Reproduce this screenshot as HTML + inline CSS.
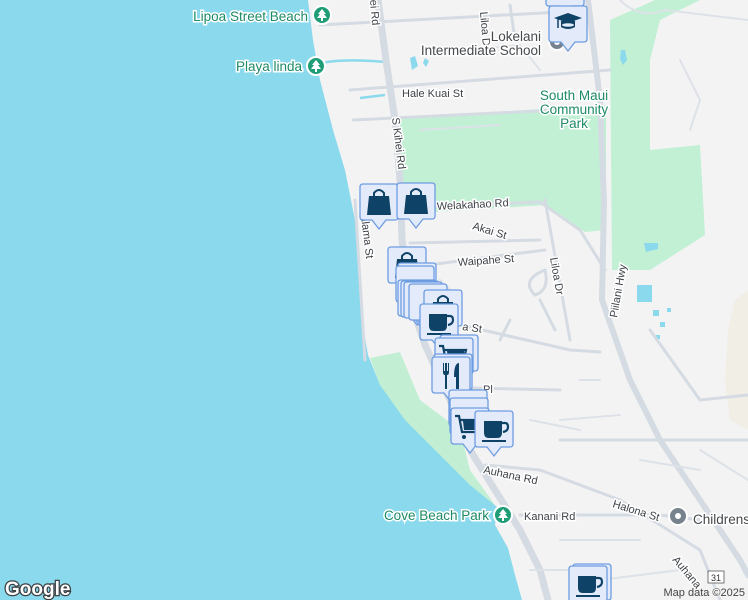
<!DOCTYPE html>
<html><head><meta charset="utf-8"><style>
html,body{margin:0;padding:0;width:748px;height:600px;overflow:hidden;background:#f4f3f4}
svg{display:block}
text{font-family:"Liberation Sans",sans-serif}
</style></head><body>
<svg width="748" height="600" viewBox="0 0 748 600" xmlns="http://www.w3.org/2000/svg">
<defs>
<g id="mk">
<path d="M3 0H35Q38 0 38 3V33Q38 36 35 36H26L19 45L12 36H3Q0 36 0 33V3Q0 0 3 0Z" fill="#e3ebfb" stroke="#6d9ce0" stroke-width="1.3"/>
</g>
<g id="bag"><use href="#mk"/><path d="M9 12H29L31 31H7Z" fill="#0e4266"/><path d="M14 13V9Q19 3 24 9V13" fill="none" stroke="#0e4266" stroke-width="2"/></g>
<g id="cup"><use href="#mk"/><path d="M9 10H27V22Q27 27 22 27H14Q9 27 9 22Z" fill="#0e4266"/><path d="M27 12H30Q33 12 33 16Q33 20 28 21" fill="none" stroke="#0e4266" stroke-width="2.2"/><rect x="7" y="29" width="24" height="2" fill="#0e4266"/></g>
<g id="cart"><use href="#mk"/><path d="M4 8H8L11 24H28L31 12H9" fill="none" stroke="#0e4266" stroke-width="2.2"/><path d="M12 13h17v9h-16z" fill="#0e4266"/><circle cx="13" cy="29" r="2" fill="#0e4266"/><circle cx="26" cy="29" r="2" fill="#0e4266"/></g>
<g id="fork"><use href="#mk"/><path d="M11 6V15Q11 18 13 18V32H15V18Q17 18 17 15V6H16V14H15V6H13V14H12V6Z" fill="#0e4266"/><path d="M22 20Q22 6 27 6V32H24V20Z" fill="#0e4266"/></g>
<g id="tree"><circle r="9" fill="#1f9d77" stroke="#fff" stroke-width="2"/><path d="M0 -6L4 -1H2L5 3H1V6H-1V3H-5L-2 -1H-4Z" fill="#fff"/></g>
</defs>
<rect width="748" height="600" fill="#f4f3f4"/>
<path d="M748 290L735 300L728 330L725 380L730 420L748 430Z" fill="#f1eee6"/>
<path d="M400 118L606 105L606 230L585 232L545 205L470 210L400 214Z" fill="#c1f0d4"/>
<path d="M610 20L655 0L700 0L660 20L650 60L650 150L700 145L705 235L650 270L612 270Z" fill="#c1f0d4"/>
<path d="M370 358L400 352L420 400L460 430L470 470L495 505L470 490L430 460L400 420L380 385Z" fill="#c2efd3"/>
<path d="M0 0H308L313 40L320 80L333 130L345 170L355 220L360 270L362 320L368 355L380 385L405 420L440 455L470 485L497 507L495 525L508 548L515 575L522 600H0Z" fill="#8bd9ec"/>
<path d="M360 98L385 95" stroke="#8bd9ec" stroke-width="2.5" fill="none"/>
<path d="M318 64Q340 58 385 62" stroke="#8bd9ec" stroke-width="2.5" fill="none"/>
<path d="M410 58l5 -2 3 10 -6 4z M425 58l4 3 -3 6-3-4z" fill="#8bd9ec"/>
<path d="M621 50l4 0 2 10-4 5-3-6z M644 243l14 0 0 6-12 3z M637 285h15v17h-15z" fill="#8bd9ec"/>
<path d="M653 310h6v6h-6zM660 322h5v5h-5zM656 335h4v4h-4zM667 308h4v4h-4z" fill="#8bd9ec"/>
<g fill="none" stroke="#d5dbe2" stroke-linecap="round">
<path d="M378 0L386 60L395 120L400 180L402 240L410 300L425 345L450 400L470 450L495 490L520 530L540 570L548 600" stroke-width="7"/>
<path d="M588 0L600 100L604 200L602 300L630 380L660 440L700 500L740 560L748 575" stroke-width="6"/>
<g stroke-width="3">
<path d="M320 25L560 12L590 8"/><path d="M350 90L610 70"/><path d="M353 120L600 108"/>
<path d="M404 208L540 202L580 230L605 270"/><path d="M410 243L540 240"/><path d="M405 268L545 250"/>
<path d="M430 318L570 350L600 352"/><path d="M470 388L560 390"/><path d="M470 390L480 395"/>
<path d="M485 465L540 470L620 500L700 550L720 600"/><path d="M520 515L660 515L700 520"/>
<path d="M545 200L570 340"/><path d="M355 200L365 360"/><path d="M510 5L515 40"/><path d="M545 270Q520 280 535 295Q550 290 545 270"/>
<path d="M560 440L748 440"/><path d="M650 330L700 400L748 395"/><path d="M510 320L500 340M540 300L555 330"/>
</g>
<g stroke-width="2" stroke="#dde2e8">
<path d="M620 0Q640 20 665 10L748 20"/><path d="M680 60L700 100L690 130"/><path d="M470 50L520 45L540 70"/><path d="M420 130L500 125"/>
<path d="M440 280L460 300"/><path d="M560 420L620 415"/><path d="M530 570L600 570"/><path d="M600 580L680 570"/><path d="M560 540L640 540"/>
<path d="M580 380L600 380M530 420L580 430"/><path d="M640 460L700 470M700 450L748 480"/>
</g>
</g>
<g font-size="11" fill="#3d4247" stroke="#fff" stroke-width="3" paint-order="stroke">
<text x="402" y="97">Hale Kuai St</text>
<text x="437" y="210" transform="rotate(-3 437 210)">Welakahao Rd</text>
<text x="472" y="229" transform="rotate(17 472 229)">Akai St</text>
<text x="458" y="266" transform="rotate(-4 458 266)">Waipahe St</text>
<text x="550" y="258" transform="rotate(80 550 258)">Liloa Dr</text>
<text x="617" y="318" transform="rotate(-80 617 318)">Piilani Hwy</text>
<text x="392" y="118" transform="rotate(83 392 118)">S Kihei Rd</text>
<text x="360" y="208" transform="rotate(83 360 208)">Halama St</text>
<text x="483" y="473" transform="rotate(12 483 473)">Auhana Rd</text>
<text x="524" y="520">Kanani Rd</text>
<text x="612" y="507" transform="rotate(17 612 507)">Halona St</text>
<text x="672" y="560" transform="rotate(50 672 560)">Auhana</text>
<text x="462" y="330" transform="rotate(8 462 330)">a St</text>
<text x="483" y="393">Pl</text>
<text x="480" y="12" transform="rotate(85 480 12)">Liloa Dr</text>
<text x="370" y="0" transform="rotate(85 370 0)">ei Rd</text>
</g>
<g font-size="13.5" fill="#46494c" stroke="#fff" stroke-width="3" paint-order="stroke">
<text x="541" y="41" text-anchor="end">Lokelani</text>
<text x="541" y="55" text-anchor="end">Intermediate School</text>
</g>
<g font-size="13.5" fill="#1e8a66" stroke="#fff" stroke-width="3" paint-order="stroke" text-anchor="middle">
<text x="574" y="100">South Maui</text>
<text x="574" y="114">Community</text>
<text x="574" y="128">Park</text>
<text x="308" y="21" text-anchor="end">Lipoa Street Beach</text>
<text x="302" y="71" text-anchor="end">Playa linda</text>
<text x="489" y="520" text-anchor="end">Cove Beach Park</text>
</g>
<g font-size="13.5" fill="#45494c" stroke="#fff" stroke-width="3" paint-order="stroke"><text x="693" y="524">Childrens</text></g>
<use href="#tree" x="322" y="15"/><use href="#tree" x="316" y="66"/><use href="#tree" x="503" y="515"/>
<circle cx="557" cy="42" r="8" fill="#76828d" stroke="#fff" stroke-width="2"/><circle cx="557" cy="42" r="3" fill="#fff"/>
<circle cx="678" cy="516" r="9" fill="#76828d" stroke="#fff" stroke-width="2"/><circle cx="678" cy="516" r="3" fill="#fff"/>
<rect x="708" y="571" width="16" height="12" fill="#fff" stroke="#555" stroke-width="0.8"/><text x="716" y="581" font-size="9" text-anchor="middle" fill="#333">31</text>
<use href="#mk" x="546" y="0" transform="translate(0,-30)"/>
<g transform="translate(549,6)"><use href="#mk"/><path d="M5 12L19 7L33 12L19 17Z" fill="#0e4266"/><path d="M12 15V21Q19 25 26 21V15" fill="#0e4266"/><ellipse cx="19" cy="19" rx="6" ry="1.8" fill="#e3ebfb"/><path d="M9 13V22" stroke="#0e4266" stroke-width="1.5"/></g>
<use href="#bag" x="360" y="184"/><use href="#bag" x="397" y="183"/>
<use href="#bag" x="388" y="247"/>
<use href="#mk" x="398" y="263"/><use href="#mk" x="396" y="266"/>
<use href="#mk" x="398" y="280"/><use href="#mk" x="401" y="281"/><use href="#mk" x="404" y="282"/><use href="#mk" x="409" y="284"/>
<use href="#bag" x="424" y="290"/>
<use href="#cup" x="420" y="304"/>
<use href="#mk" x="440" y="335"/><use href="#cart" x="435" y="338"/>
<use href="#mk" x="434" y="354"/><use href="#fork" x="432" y="357"/>
<use href="#mk" x="449" y="390"/><use href="#mk" x="450" y="398"/>
<use href="#cart" x="451" y="408"/><use href="#cup" x="475" y="411"/>
<use href="#mk" x="573" y="564"/><use href="#cup" x="569" y="566"/>
<text x="5" y="595" font-size="19" font-weight="bold" fill="#fff" stroke="#3c4043" stroke-width="2.5" paint-order="stroke">Google</text>
<text x="745" y="596" font-size="11" fill="#444" text-anchor="end" stroke="#f4f3f4" stroke-width="2" paint-order="stroke">Map data ©2025</text>
</svg>
</body></html>
